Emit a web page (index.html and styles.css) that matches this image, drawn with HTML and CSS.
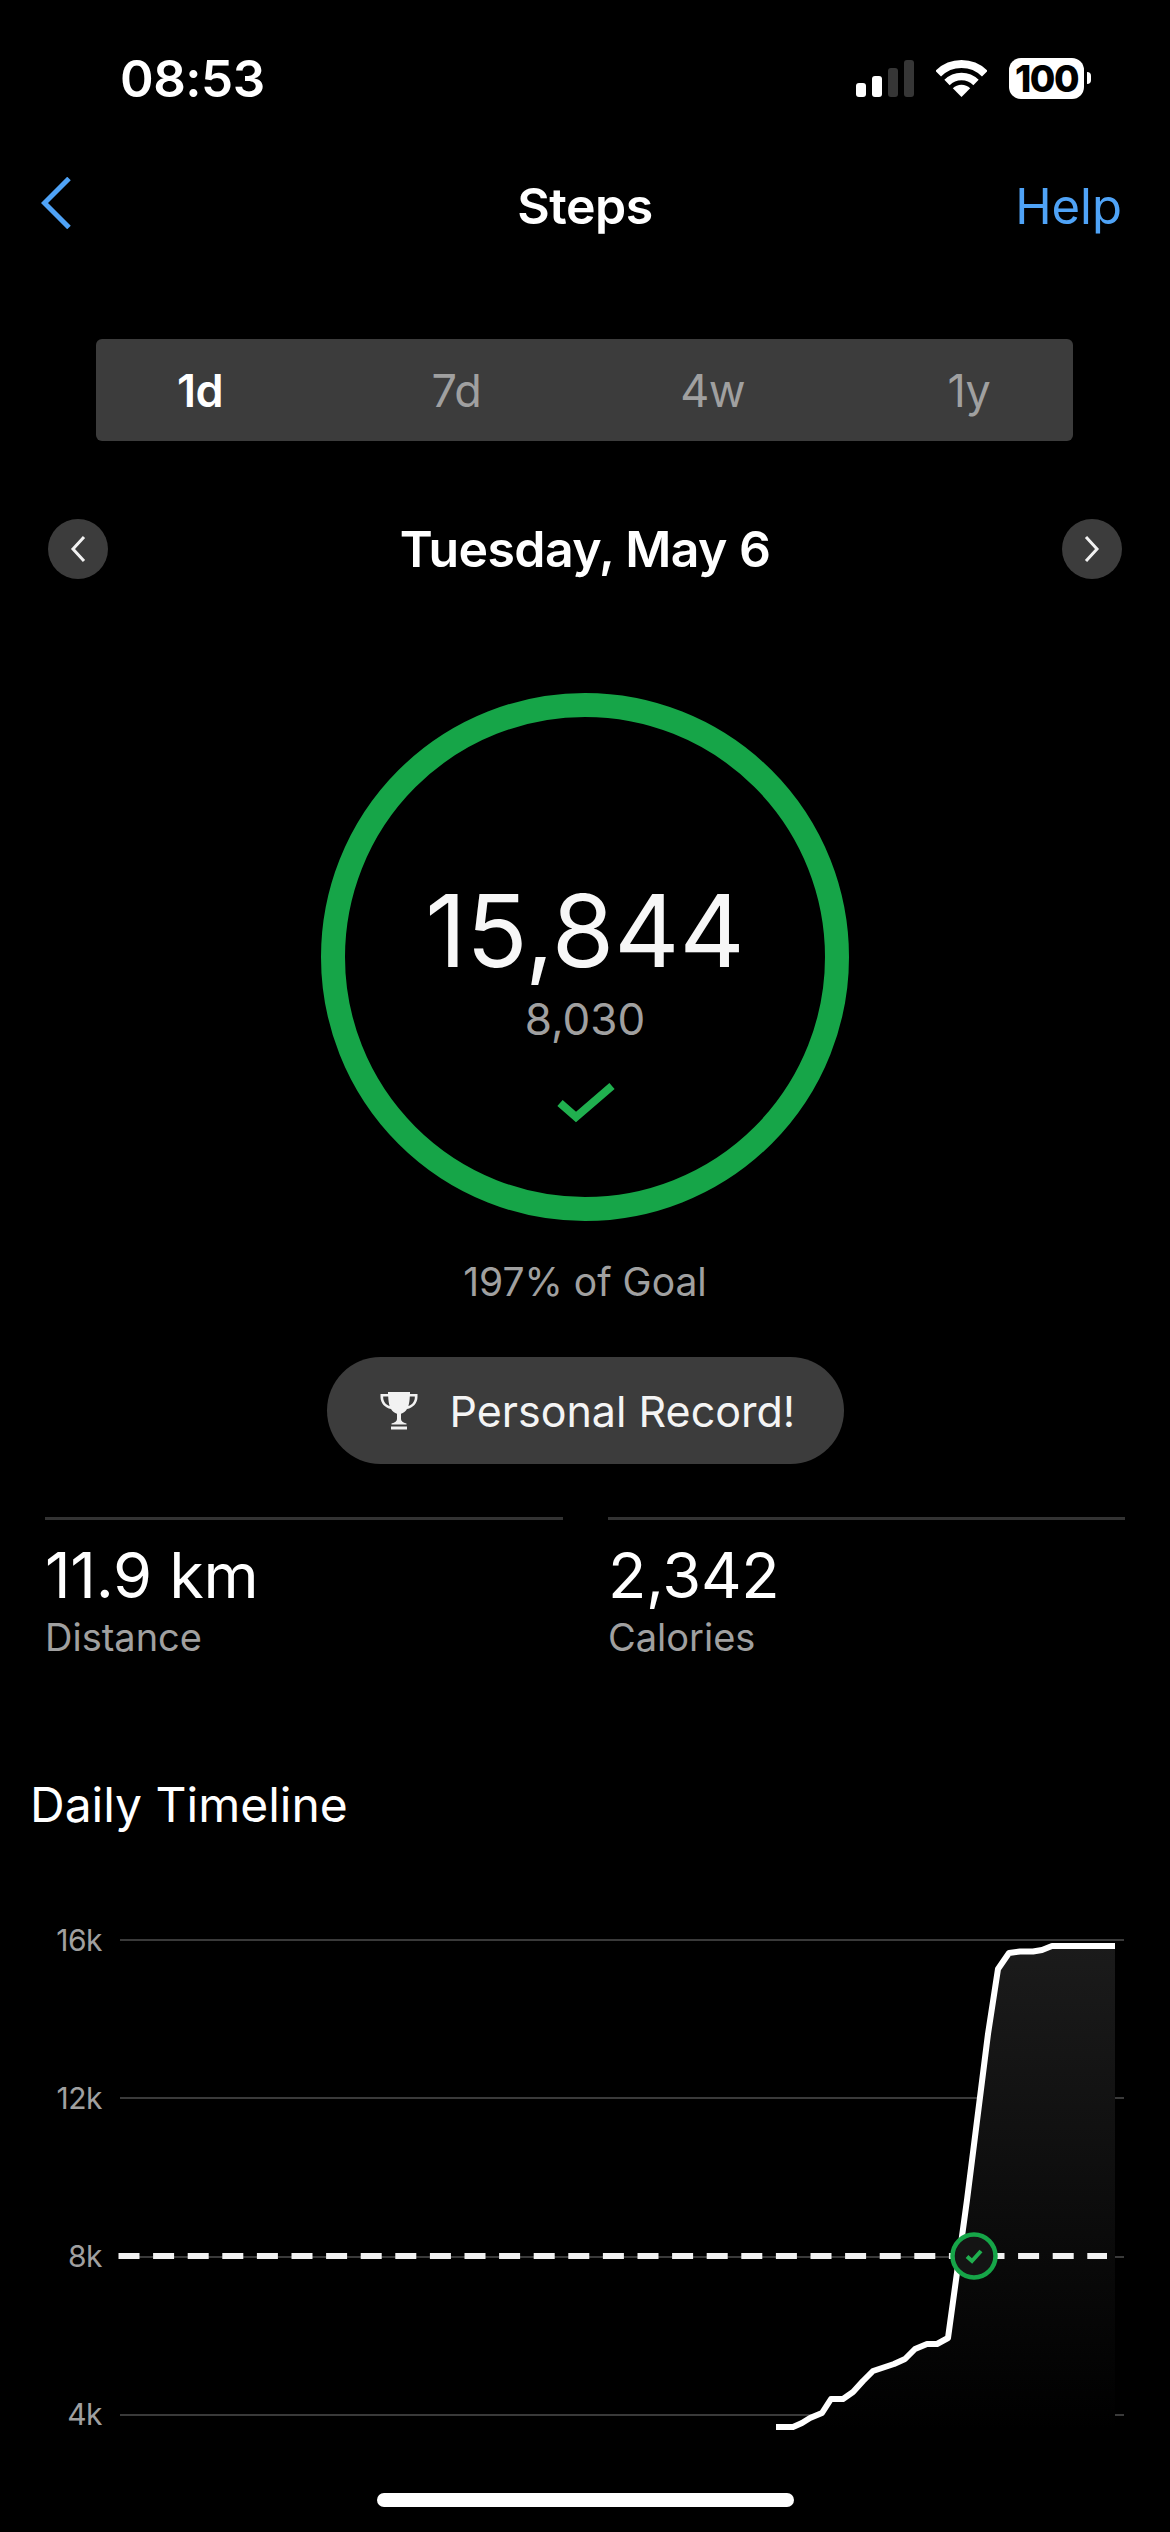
FILE: index.html
```html
<!DOCTYPE html>
<html lang="en">
<head>
<meta charset="utf-8">
<title>Steps</title>
<link rel="stylesheet" href="styles.css">
</head>
<body>
<div class="phone">
  <header class="status">
    <span class="time">08:53</span>
    <div class="status-icons">
      <svg class="signal" width="58" height="37" viewBox="0 0 58 37"><rect x="0" y="23" width="10" height="14" rx="3" fill="#fff"/><rect x="16" y="16" width="10" height="21" rx="3" fill="#fff"/><rect x="32" y="8" width="10" height="29" rx="3" fill="#363636"/><rect x="48" y="0" width="10" height="37" rx="3" fill="#363636"/></svg>
      <svg class="wifi" width="51" height="37" viewBox="0 0 51 37"><path d="M2.2 13.7A33 33 0 0 1 48.8 13.7" fill="none" stroke="#fff" stroke-width="8"/><path d="M11 22.5A20.5 20.5 0 0 1 40 22.5" fill="none" stroke="#fff" stroke-width="7.5"/><path d="M25.5 37L16.8 28.3A12.3 12.3 0 0 1 34.2 28.3Z" fill="#fff"/></svg>
      <div class="battery"><span class="battery-body">100</span><span class="battery-cap"></span></div>
    </div>
  </header>

  <nav class="nav">
    <svg class="back" width="30" height="52" viewBox="0 0 30 52"><path d="M28 1.5L3.5 26L28 50.5" fill="none" stroke="#4fa3f7" stroke-width="5"/></svg>
    <h1 class="nav-title">Steps</h1>
    <a class="nav-help">Help</a>
  </nav>

  <div class="segment">
    <span class="tab tab-on">1d</span>
    <span class="tab">7d</span>
    <span class="tab">4w</span>
    <span class="tab">1y</span>
  </div>

  <div class="date-row">
    <button class="round"><svg width="16" height="28" viewBox="0 0 16 28"><path d="M14 2L3 14L14 26" fill="none" stroke="#f2f2f2" stroke-width="3"/></svg></button>
    <span class="date">Tuesday, May 6</span>
    <button class="round"><svg width="16" height="28" viewBox="0 0 16 28"><path d="M2 2L13 14L2 26" fill="none" stroke="#f2f2f2" stroke-width="3"/></svg></button>
  </div>

  <section class="ring">
    <div class="count">15,844</div>
    <div class="goal">8,030</div>
    <svg class="ring-check" width="60" height="44" viewBox="0 0 60 44"><path d="M4 22L20 36L56 5" fill="none" stroke="#20b04f" stroke-width="8"/></svg>
  </section>

  <p class="percent">197% of Goal</p>

  <div class="pill">
    <svg class="trophy" width="38" height="38" viewBox="0 0 38 38"><path d="M8 0H30V2H37.5V5C37.5 11 33 16 27 17C25.5 19.5 23.5 21 21 21.7V27C21 29 23 30.5 26.5 31.5V32.5H11.5V31.5C15 30.5 17 29 17 27V21.7C14.5 21 12.5 19.5 11 17C5 16 .5 11 .5 5V2H8ZM8.2 4.6H3.2V6C3.4 9.6 6 12.8 9.6 14C8.9 11.8 8.3 8.4 8.2 4.6ZM29.8 4.6C29.7 8.4 29.1 11.8 28.4 14C32 12.8 34.6 9.6 34.8 6V4.6Z" fill="#f2f2f2" fill-rule="evenodd"/><rect x="11" y="34.5" width="16" height="3" fill="#f2f2f2"/></svg>
    <span>Personal Record!</span>
  </div>

  <div class="stats">
    <div class="stat"><div class="stat-value">11.9 km</div><div class="stat-label">Distance</div></div>
    <div class="stat"><div class="stat-value">2,342</div><div class="stat-label">Calories</div></div>
  </div>

  <h2 class="section-title">Daily Timeline</h2>

  <svg class="chart" width="1170" height="540" viewBox="0 1900 1170 540">
    <defs>
      <linearGradient id="area" x1="0" y1="1946" x2="0" y2="2430" gradientUnits="userSpaceOnUse">
        <stop offset="0" stop-color="#1b1b1b"/>
        <stop offset="1" stop-color="#000"/>
      </linearGradient>
    </defs>
    <g class="grid">
      <line x1="120" y1="1940" x2="1124" y2="1940"/>
      <line x1="120" y1="2098" x2="1124" y2="2098"/>
      <line x1="120" y1="2257" x2="1124" y2="2257"/>
      <line x1="120" y1="2415" x2="1124" y2="2415"/>
    </g>
    <g class="axis">
      <text x="102" y="1951">16k</text>
      <text x="102" y="2109">12k</text>
      <text x="102" y="2267">8k</text>
      <text x="102" y="2425">4k</text>
    </g>
    <path d="M776 2427H793L802 2423L810 2418L822 2413L831 2399H843L853 2392L863 2381L873 2371L894 2364L905 2359L915 2349L927 2344H937L948 2338L967 2200L988 2034L998 1969L1009 1953L1020 1951.5H1033L1042 1950L1052 1946H1115V2430H776Z" fill="url(#area)"/>
    <path class="goal-line" d="M118.5 2256H1107"/>
    <path class="curve" d="M776 2427H793L802 2423L810 2418L822 2413L831 2399H843L853 2392L863 2381L873 2371L894 2364L905 2359L915 2349L927 2344H937L948 2338L967 2200L988 2034L998 1969L1009 1953L1020 1951.5H1033L1042 1950L1052 1946H1115"/>
    <circle cx="974" cy="2256" r="21.5" fill="#141414" stroke="#16a548" stroke-width="4.5"/>
    <path d="M967 2256.5L972 2261L981 2251" fill="none" stroke="#20b04f" stroke-width="4"/>
  </svg>

  <div class="home-bar"></div>
</div>
</body>
</html>
```

FILE: styles.css
```css
* { box-sizing: border-box; }
html, body { margin: 0; padding: 0; background: #000; }
body { font-family: Inter, "Liberation Sans", sans-serif; color: #fff; }
.phone { position: relative; width: 1170px; height: 2532px; overflow: hidden; background: #000; }

.status { height: 156px; display: flex; align-items: center; justify-content: space-between; padding: 0 79px 0 120px; }
.time { font-size: 51px; font-weight: 600; letter-spacing: -0.5px; }
.status-icons { display: flex; align-items: center; gap: 22px; }
.battery { display: flex; align-items: center; gap: 3px; }
.battery-body { width: 75px; height: 41px; border-radius: 12px; background: #fff; color: #000; font-size: 37px; font-weight: 800; line-height: 41px; text-align: center; letter-spacing: -1.5px; }
.battery-cap { width: 4px; height: 12px; background: #fff; border-radius: 0 4px 4px 0; }

.nav { height: 100px; display: flex; align-items: center; justify-content: space-between; padding: 0 48px 0 41px; position: relative; }
.back { margin-top: -6px; }
.nav-title { position: absolute; left: 0; right: 0; margin: 0; text-align: center; font-size: 50px; font-weight: 600; letter-spacing: -0.5px; }
.nav-help { font-size: 49px; font-weight: 400; color: #4fa3f7; }

.segment { margin: 83px 97px 0 96px; height: 102px; background: #3c3c3c; border-radius: 6px; display: flex; justify-content: space-between; align-items: center; }
.tab { width: 208px; text-align: center; font-size: 45px; letter-spacing: -0.5px; color: #a0a0a0; }
.tab-on { color: #fff; font-weight: 600; }

.date-row { margin-top: 78px; padding: 0 48px; height: 60px; display: flex; align-items: center; justify-content: space-between; }
.round { width: 60px; height: 60px; padding: 0; border: 0; border-radius: 50%; background: #3c3c3c; display: flex; align-items: center; justify-content: center; }
.date { font-size: 50px; font-weight: 600; letter-spacing: -0.6px; }

.ring { margin: 114px auto 0; width: 528px; height: 528px; border: 24px solid #16a548; border-radius: 50%; display: flex; flex-direction: column; align-items: center; }
.count { margin-top: 158px; font-size: 101px; line-height: 110px; font-weight: 400; color: #f7f7f7; }
.goal { margin-top: 4px; font-size: 44px; line-height: 60px; color: #a0a0a0; }
.ring-check { margin-top: 32px; margin-left: 1px; }

.percent { margin: 36px 0 0; text-align: center; font-size: 39px; line-height: 50px; color: #a0a0a0; }

.pill { margin: 50px auto 0; width: 517px; height: 107px; border-radius: 54px; background: #3c3c3c; display: flex; align-items: center; gap: 32px; padding-left: 53px; font-size: 43px; color: #f4f4f4; }

.stats { margin: 53px 45px 0; display: grid; grid-template-columns: 518px 517px; column-gap: 45px; }
.stat { border-top: 3px solid #333; padding-top: 17px; }
.stat-value { font-size: 63px; line-height: 76px; letter-spacing: -0.3px; }
.stat-label { font-size: 38px; line-height: 48px; color: #a0a0a0; }

.section-title { margin: 114px 0 0 30px; font-size: 48px; line-height: 60px; font-weight: 400; }

.chart { display: block; margin-top: 65px; }
.grid line { stroke: #3a3a3a; stroke-width: 2; }
.axis text { fill: #a0a0a0; font-size: 30px; letter-spacing: -0.5px; text-anchor: end; }
.goal-line { fill: none; stroke: #f2f2f2; stroke-width: 6; stroke-dasharray: 21 13.6; }
.curve { fill: none; stroke: #fff; stroke-width: 6; stroke-linejoin: round; }

.home-bar { position: absolute; left: 377px; top: 2493px; width: 417px; height: 14px; border-radius: 7px; background: #fff; }
```
